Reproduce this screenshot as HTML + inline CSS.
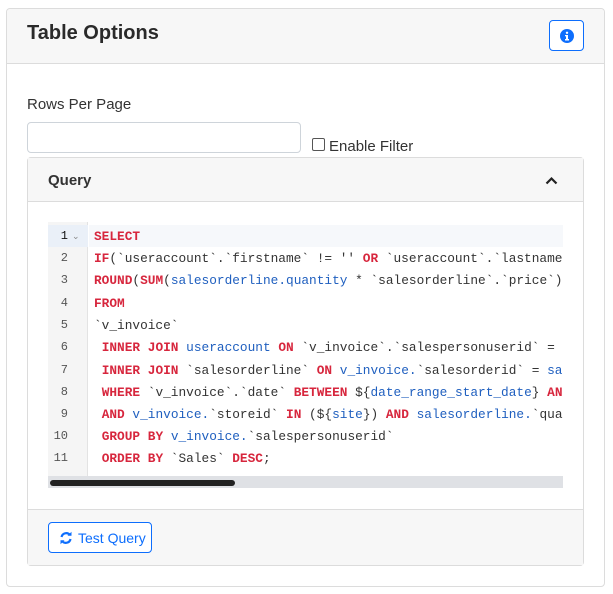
<!DOCTYPE html>
<html><head><style>
*{box-sizing:border-box;margin:0;padding:0}
body{width:613px;height:594px;background:#fff;font-family:"Liberation Sans",sans-serif;color:#212529;position:relative;overflow:hidden}
.a{position:absolute}
.card{left:6px;top:8px;width:599px;height:579px;border:1px solid #dcdcdc;border-radius:4px}
.hdr{left:7px;top:9px;width:597px;height:55px;background:#f7f7f7;border-bottom:1px solid #dcdcdc;border-radius:4px 4px 0 0}
.title{left:27px;top:22px;font-size:20px;font-weight:bold;color:#2a2a2a}
.ib{left:549px;top:20px;width:35px;height:31px;border:1px solid #0d6efd;border-radius:4px;background:#fff}
.lbl{left:27px;top:96px;font-size:15px;color:#333}
.inp{left:27px;top:122px;width:274px;height:31px;border:1px solid #ced4da;border-radius:4px}
.cb{left:312px;top:138px;width:13px;height:13px;border:1px solid #555;border-radius:2px}
.ef{left:329px;top:138px;font-size:15px;color:#333}
.ic{left:27px;top:157px;width:557px;height:409px;border:1px solid #dcdcdc;border-radius:4px}
.ih{left:28px;top:158px;width:555px;height:44px;background:#f7f7f7;border-bottom:1px solid #dcdcdc}
.q{left:48px;top:172px;font-size:15px;font-weight:bold;color:#333}
.ed{left:48px;top:222px;width:515px;height:266px;background:#fff;overflow:hidden}
.gut{left:0;top:0;width:40px;height:254px;background:#f5f5f5;border-right:1px solid #e3e3e3}
.ln{position:absolute;left:0;width:20px;text-align:right;font-family:"Liberation Mono",monospace;font-size:12px;color:#555}
.cd{position:absolute;left:46px;font-family:"Liberation Mono",monospace;font-size:12.8px;white-space:pre;color:#333}
.k{color:#d7263d;font-weight:bold}.b{color:#1f5fbf}
.track{left:0;top:254px;width:515px;height:12px;background:#dfe1e5}
.thumb{left:2px;top:258px;width:185px;height:6px;background:#222;border-radius:3px}
.ft{left:28px;top:509px;width:555px;height:56px;background:#f7f7f7;border-top:1px solid #dcdcdc}
.tb{left:48px;top:522px;width:104px;height:31px;border:1px solid #0d6efd;border-radius:4px;background:#fff;color:#0d6efd;font-size:14px}
</style></head><body>
<div class="a card"></div>
<div class="a hdr"></div>
<div class="a title">Table Options</div>
<div class="a ib"><svg class="a" style="left:10px;top:8px" width="14" height="14" viewBox="0 0 14 14"><circle cx="7" cy="7" r="7" fill="#0d6efd"/><rect x="6" y="6" width="2" height="5" fill="#fff"/><rect x="5" y="10" width="4" height="1.5" fill="#fff"/><rect x="5" y="6" width="2" height="1.3" fill="#fff"/><circle cx="7" cy="3.8" r="1.2" fill="#fff"/></svg></div>
<div class="a lbl">Rows Per Page</div>
<div class="a inp"></div>
<div class="a cb"></div>
<div class="a ef">Enable Filter</div>
<div class="a ic"></div>
<div class="a ih"></div>
<div class="a q">Query</div>
<svg class="a" style="left:545px;top:176px" width="13" height="9" viewBox="0 0 13 9"><path d="M1.5 7.5 L6.5 2.5 L11.5 7.5" stroke="#222" stroke-width="2.2" fill="none"/></svg>
<div class="a ed">
<div class="a gut"></div>
<div class="a" style="left:0;top:3px;width:40px;height:22px;background:#eaf0f8"></div>
<div class="a" style="left:41px;top:3px;width:474px;height:22px;background:#f6f8fb"></div>
<div class="ln" style="top:7px;color:#111">1</div><div class="a" style="left:24px;top:9px;font-size:9px;color:#888">⌄</div>
<div class="ln" style="top:29px">2</div>
<div class="ln" style="top:51px">3</div>
<div class="ln" style="top:74px">4</div>
<div class="ln" style="top:96px">5</div>
<div class="ln" style="top:118px">6</div>
<div class="ln" style="top:141px">7</div>
<div class="ln" style="top:163px">8</div>
<div class="ln" style="top:185px">9</div>
<div class="ln" style="top:207px">10</div>
<div class="ln" style="top:229px">11</div>
<div class="cd" style="top:7px"><span class="k">SELECT</span></div>
<div class="cd" style="top:29px"><span class="k">IF</span>(`useraccount`.`firstname` != '' <span class="k">OR</span> `useraccount`.`lastname</div>
<div class="cd" style="top:51px"><span class="k">ROUND</span>(<span class="k">SUM</span>(<span class="b">salesorderline.quantity</span> * `salesorderline`.`price`)</div>
<div class="cd" style="top:74px"><span class="k">FROM</span></div>
<div class="cd" style="top:96px">`v_invoice`</div>
<div class="cd" style="top:118px"> <span class="k">INNER JOIN</span> <span class="b">useraccount</span> <span class="k">ON</span> `v_invoice`.`salespersonuserid` =</div>
<div class="cd" style="top:141px"> <span class="k">INNER JOIN</span> `salesorderline` <span class="k">ON</span> <span class="b">v_invoice.</span>`salesorderid` = <span class="b">sa</span></div>
<div class="cd" style="top:163px"> <span class="k">WHERE</span> `v_invoice`.`date` <span class="k">BETWEEN</span> ${<span class="b">date_range_start_date</span>} <span class="k">AN</span></div>
<div class="cd" style="top:185px"> <span class="k">AND</span> <span class="b">v_invoice.</span>`storeid` <span class="k">IN</span> (${<span class="b">site</span>}) <span class="k">AND</span> <span class="b">salesorderline.</span>`qua</div>
<div class="cd" style="top:207px"> <span class="k">GROUP BY</span> <span class="b">v_invoice.</span>`salespersonuserid`</div>
<div class="cd" style="top:229px"> <span class="k">ORDER BY</span> `Sales` <span class="k">DESC</span>;</div>
<div class="a track"></div>
<div class="a thumb"></div>
</div>
<div class="a ft"></div>
<div class="a tb"><svg class="a" style="left:10px;top:8px" width="14" height="14" viewBox="0 0 14 14"><path d="M2.5 6 A4.8 4.8 0 0 1 11 4" stroke="#0d6efd" stroke-width="2.2" fill="none"/><path d="M8.5 4.8 L12.5 4.8 L12.5 0.8 Z" fill="#0d6efd"/><path d="M11.5 8 A4.8 4.8 0 0 1 3 10" stroke="#0d6efd" stroke-width="2.2" fill="none"/><path d="M5.5 9.2 L1.5 9.2 L1.5 13.2 Z" fill="#0d6efd"/></svg><span class="a" style="left:29px;top:7px">Test Query</span></div>
</body></html>
